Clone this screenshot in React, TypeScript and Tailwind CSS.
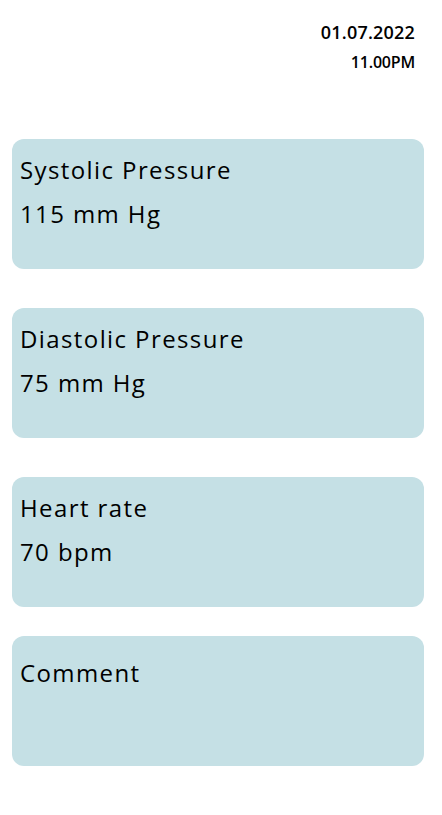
import React from "react";

const cards = [
  { title: "Systolic Pressure", value: "115 mm Hg" },
  { title: "Diastolic Pressure", value: "75 mm Hg" },
  { title: "Heart rate", value: "70 bpm" },
];

export default function App() {
  return (
    <div
      className="w-[442px] h-[815px] bg-white text-black"
      style={{ fontFamily: "'Open Sans', 'Noto Sans', sans-serif" }}
    >
      <div className="flex flex-col items-end pt-[21px] pr-[27px]">
        <div className="text-[18px] leading-[22px] font-semibold tracking-[0.2px]">01.07.2022</div>
        <div className="text-[16px] leading-[20px] font-semibold mt-[9px] tracking-[-0.2px]">11.00PM</div>
      </div>
      <div className="flex flex-col pl-[12px] pr-[18px] mt-[67px]">
        <div className="flex flex-col gap-[39px]">
          {cards.map((c) => (
            <div key={c.title} className="h-[130px] rounded-[12px] bg-[#c5e0e5] px-[8px] pt-[16px]">
              <div className="text-[24px] leading-[30px] font-medium tracking-[1.4px]">{c.title}</div>
              <div className="text-[24px] leading-[30px] font-medium mt-[14px] tracking-[1.4px]">{c.value}</div>
            </div>
          ))}
        </div>
        <div className="h-[130px] rounded-[12px] bg-[#c5e0e5] px-[8px] pt-[22px] mt-[29px]">
          <div className="text-[24px] leading-[30px] font-medium tracking-[1.4px]">Comment</div>
        </div>
      </div>
    </div>
  );
}
